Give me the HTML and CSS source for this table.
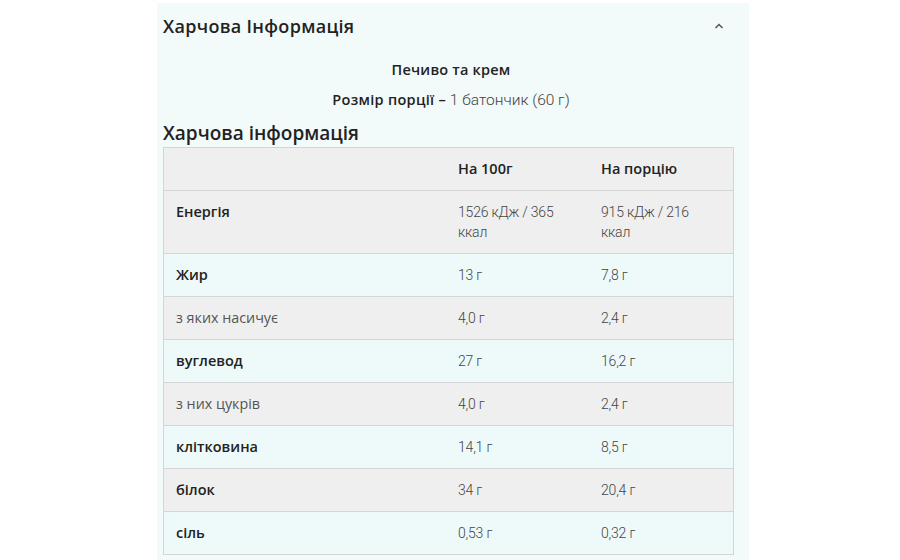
FILE: index.html
```html
<!DOCTYPE html>
<html lang="uk">
<head>
<meta charset="utf-8">
<link rel="stylesheet" href="styles.css">
</head>
<body>
<section class="panel">
  <div class="panel-head">
    <h2 class="title">Харчова Інформація</h2>
    <svg class="chev" width="10" height="6" viewBox="0 0 10 6"><path d="M1.5 5 L5 1.5 L8.5 5" fill="none" stroke="#555" stroke-width="1.5"/></svg>
  </div>
  <p class="flavour">Печиво та крем</p>
  <p class="serving"><b>Розмір порції –</b> <span>1 батончик (60 г)</span></p>
  <h3 class="subtitle">Харчова інформація</h3>
  <table class="nutri">
    <thead>
      <tr><th></th><th>На 100г</th><th>На порцію</th></tr>
    </thead>
    <tbody>
      <tr><td class="lbl">Енергія</td><td>1526 кДж / 365 ккал</td><td>915 кДж / 216 ккал</td></tr>
      <tr><td class="lbl">Жир</td><td>13 г</td><td>7,8 г</td></tr>
      <tr><td class="sub">з яких насичує</td><td>4,0 г</td><td>2,4 г</td></tr>
      <tr><td class="lbl">вуглевод</td><td>27 г</td><td>16,2 г</td></tr>
      <tr><td class="sub">з них цукрів</td><td>4,0 г</td><td>2,4 г</td></tr>
      <tr><td class="lbl">клітковина</td><td>14,1 г</td><td>8,5 г</td></tr>
      <tr><td class="lbl">білок</td><td>34 г</td><td>20,4 г</td></tr>
      <tr><td class="lbl">сіль</td><td>0,53 г</td><td>0,32 г</td></tr>
    </tbody>
  </table>
</section>
</body>
</html>
```
FILE: styles.css
```css
html, body {
  margin: 0;
  padding: 0;
  background: #ffffff;
}
body {
  font-family: "Open Sans", "Noto Sans", sans-serif;
  color: #222;
  height: 560px;
  overflow: hidden;
}
.panel {
  margin: 3px 0 0 157px;
  width: 576px;
  padding: 0 10px 20px 6px;
  background: #f3fafa;
}
.panel-head {
  display: flex;
  align-items: center;
  justify-content: space-between;
  height: 40px;
  padding-top: 3px;
}
.title {
  margin: 0;
  font-size: 18px;
  font-weight: 600;
  letter-spacing: 0.3px;
  color: #222;
}
.chev {
  margin-right: 15px;
}
.flavour {
  margin: 14px 0 0;
  line-height: 20px;
  text-align: center;
  font-size: 14.5px;
  font-weight: 600;
  letter-spacing: 0.2px;
  color: #222;
}
.serving {
  margin: 10px 0 0;
  line-height: 20px;
  text-align: center;
  font-size: 14.5px;
  color: #222;
}
.serving b { font-weight: 600; letter-spacing: 0.3px; }
.serving span {
  font-family: Roboto, sans-serif;
  font-weight: 300;
  color: #444;
  font-size: 15.5px;
}
.subtitle {
  margin: 11px 0 0;
  line-height: 24px;
  font-size: 19px;
  font-weight: 600;
  color: #222;
}
.nutri {
  margin-top: 2px;
  width: 571px;
  border-collapse: collapse;
  table-layout: fixed;
  border: 1px solid #d4d6d6;
}
.nutri th, .nutri td {
  padding: 11px 12px;
  line-height: 20px;
  text-align: left;
  vertical-align: top;
  border-top: 1px solid #d4d6d6;
}
.nutri th:first-child, .nutri td:first-child { width: 258px; }
.nutri th:nth-child(2), .nutri td:nth-child(2) { width: 119px; }
.nutri thead tr { background: #efefef; }
.nutri th {
  font-size: 14.5px;
  font-weight: 600;
  color: #222;
}
.nutri tbody tr:nth-child(odd) { background: #efefef; }
.nutri tbody tr:nth-child(even) { background: #eefafa; }
.nutri td {
  font-family: Roboto, sans-serif;
  font-weight: 300;
  font-size: 14px;
  letter-spacing: -0.2px;
  color: #444;
}
.nutri td.lbl {
  font-family: "Open Sans", sans-serif;
  font-weight: 600;
  font-size: 14.5px;
  letter-spacing: 0;
  color: #222;
}
.nutri td.sub {
  font-family: "Open Sans", sans-serif;
  font-weight: 400;
  font-size: 14.3px;
  letter-spacing: 0;
  color: #555;
}
```
